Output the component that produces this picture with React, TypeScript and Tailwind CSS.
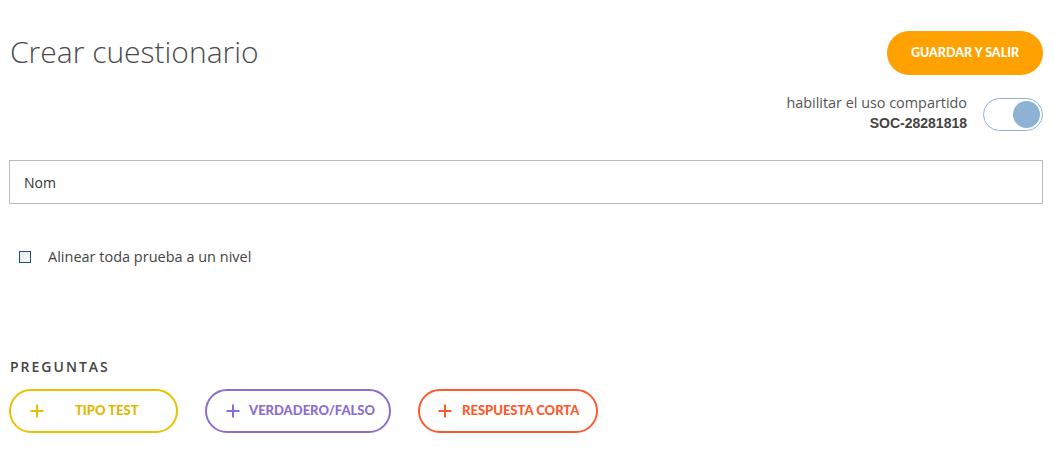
import React from "react";

function Plus({ color }: { color: string }) {
  return (
    <svg width="14" height="14" viewBox="0 0 14 14" className="shrink-0">
      <path d="M7 0.5V13.5M0.5 7H13.5" stroke={color} strokeWidth="2" fill="none" />
    </svg>
  );
}

export default function App() {
  return (
    <div className="w-[1054px] h-[464px] bg-white font-['Open_Sans',sans-serif] text-[#444] px-[9px] pt-[31px]">
      <div className="flex justify-between items-start">
        <h1 className="text-[30px] font-light text-[#4a4a4a] leading-none pt-[6px] pl-[1px]">Crear cuestionario</h1>
        <button className="w-[156px] h-[44px] rounded-full bg-[#ffa100] text-white text-[12.5px] font-black font-['Lato',sans-serif] mr-[2px]">
          GUARDAR Y SALIR
        </button>
      </div>
      <div className="flex justify-end items-center mt-[18px] mr-[2px] gap-[16px]">
        <div className="text-right leading-[20px]">
          <div className="text-[14.4px] text-[#555]">habilitar el uso compartido</div>
          <div className="text-[14px] font-bold text-[#444] font-['Liberation_Sans',sans-serif]">SOC-28281818</div>
        </div>
        <div className="w-[60px] h-[33px] rounded-full border border-[#8db3d3] flex items-center justify-end pr-[2px] mt-[2px]">
          <div className="w-[27px] h-[27px] rounded-full bg-[#8db2d4]" />
        </div>
      </div>
      <div className="mt-[27px] h-[44px] mr-[2px] border border-[#bbbbbb] flex items-center px-[14px] text-[14px] text-[#333]">
        Nom
      </div>
      <div className="flex items-center mt-[42px] pl-[10px] gap-[17px]">
        <div className="w-[12px] h-[12px] border border-[#1f4e79] bg-gradient-to-br from-[#e8e8e8] to-[#fafafa]" />
        <span className="text-[14.5px] text-[#444]">Alinear toda prueba a un nivel</span>
      </div>
      <div className="mt-[88px] pl-[1px] text-[14px] font-semibold tracking-[2px] text-[#444]">PREGUNTAS</div>
      <div className="flex gap-[27px] mt-[12px] font-['Lato',sans-serif] text-[13px] font-black">
        <button className="w-[169px] h-[44px] rounded-full border-2 border-[#e8c200] text-[#e0b800] flex items-center pl-[19px]">
          <Plus color="#e6c000" />
          <span className="ml-[31px]">TIPO TEST</span>
        </button>
        <button className="w-[186px] h-[44px] rounded-full border-2 border-[#8b6dce] text-[#8b6dce] flex items-center pl-[19px]">
          <Plus color="#8b6dce" />
          <span className="ml-[9px]">VERDADERO/FALSO</span>
        </button>
        <button className="w-[180px] h-[44px] rounded-full border-2 border-[#fc5a2c] text-[#fc5a2c] flex items-center pl-[18px]">
          <Plus color="#fc5a2c" />
          <span className="ml-[10px]">RESPUESTA CORTA</span>
        </button>
      </div>
    </div>
  );
}
